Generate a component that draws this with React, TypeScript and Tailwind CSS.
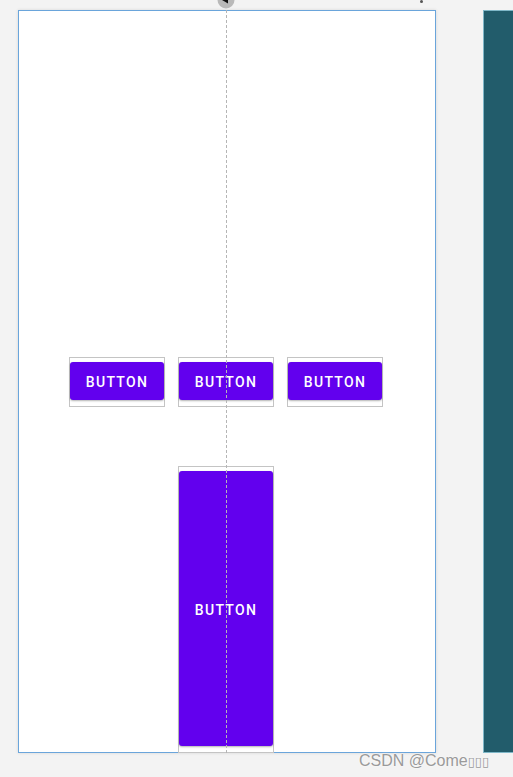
import React from "react";

function OutlinedButton({ tall }: { tall?: boolean }) {
  return (
    <div
      className={`flex w-[96px] flex-col border border-[#c4c4c4] pt-[4px] pb-[6px] ${tall ? "h-[287px]" : "h-[50px]"}`}
    >
      <div className="flex flex-1 items-center justify-center rounded-[3px] bg-[#6200ee] shadow-[0_1px_2px_rgba(0,0,0,0.3)]">
        <span
          className={`font-['Roboto',sans-serif] text-[14px] font-medium tracking-[1.3px] text-white ${tall ? "pt-[4px]" : "pt-[2px]"}`}
        >
          BUTTON
        </span>
      </div>
    </div>
  );
}

export default function App() {
  return (
    <div className="relative h-[777px] w-[513px] overflow-hidden bg-[#f3f3f3] font-['Liberation_Sans',sans-serif]">
      <div className="flex gap-[47px] pl-[18px] pt-[10px]">
        {/* Design surface */}
        <div className="relative flex h-[743px] w-[418px] shrink-0 flex-col border border-[#6aa5db] bg-white shadow-[0_0_3px_rgba(0,0,0,0.12)]">
          <div className="ml-[50px] mt-[346px] flex gap-[13px]">
            <OutlinedButton />
            <OutlinedButton />
            <OutlinedButton />
          </div>
          <div className="ml-[159px] mt-[59px]">
            <OutlinedButton tall />
          </div>
          {/* center guide */}
          <div className="pointer-events-none absolute left-[207px] top-[-11px] h-[753px] border-l border-dashed border-[#b5b5b5]" />
        </div>
        {/* Blueprint surface */}
        <div className="h-[743px] w-[60px] shrink-0 border border-[#7fb7c8] bg-[#225c6b]" />
      </div>

      {/* guide handle */}
      <svg className="absolute left-[217px] top-[-9px]" width="18" height="18" viewBox="0 0 18 18">
        <circle cx="9" cy="9" r="8.5" fill="#b9b9b9" />
        <path d="M5 9 L11 5.5 L11 12.5 Z" fill="#111" />
      </svg>
      <div className="absolute left-[420px] top-0 h-[3px] w-[3px] rounded-full bg-[#555]" />

      {/* watermark */}
      <div className="absolute left-[359px] top-[751px] text-[16px] leading-[20px] text-[#9a9a9a] [text-shadow:0_0_2px_#fff]">
        CSDN @Come<span className="font-['DejaVu_Sans',sans-serif] text-[13px]">▯▯▯</span>
      </div>
    </div>
  );
}
